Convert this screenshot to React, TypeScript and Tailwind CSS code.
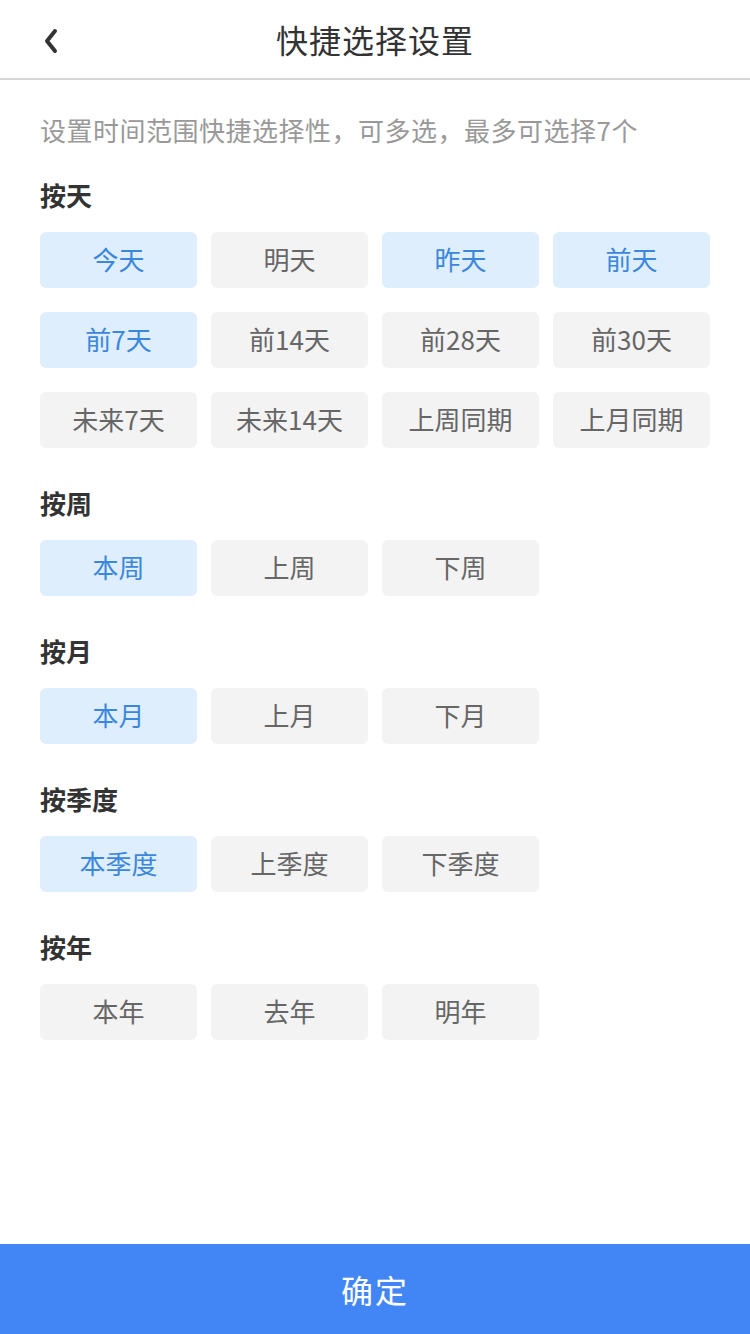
import { useState } from 'react';

type Group = { title: string; items: string[] };

const groups: Group[] = [
  {
    title: '按天',
    items: ['今天', '明天', '昨天', '前天', '前7天', '前14天', '前28天', '前30天', '未来7天', '未来14天', '上周同期', '上月同期'],
  },
  { title: '按周', items: ['本周', '上周', '下周'] },
  { title: '按月', items: ['本月', '上月', '下月'] },
  { title: '按季度', items: ['本季度', '上季度', '下季度'] },
  { title: '按年', items: ['本年', '去年', '明年'] },
];

const initial = ['今天', '昨天', '前天', '前7天', '本周', '本月', '本季度'];

export default function App() {
  const [selected, setSelected] = useState<Set<string>>(new Set(initial));

  const toggle = (name: string) => {
    setSelected(prev => {
      const next = new Set(prev);
      if (next.has(name)) {
        next.delete(name);
      } else if (next.size < 7) {
        next.add(name);
      }
      return next;
    });
  };

  return (
    <div className="min-h-[1334px] w-[750px] bg-white flex flex-col font-['Noto_Sans_CJK_SC','Noto_Sans',sans-serif]">
      <header className="relative h-[80px] flex items-center justify-center border-b-2 border-[#d6d6d6]">
        <button className="absolute left-[36px] top-[26px] w-[30px] h-[30px] flex items-center justify-center">
          <svg width="18" height="28" viewBox="0 0 18 28" fill="none">
            <path d="M13 4 L5 14 L13 24" stroke="#333" strokeWidth="4" strokeLinecap="round" strokeLinejoin="round" />
          </svg>
        </button>
        <h1 className="text-[32px] leading-[40px] text-[#333] tracking-[1px]">快捷选择设置</h1>
      </header>

      <main className="flex-1 px-[40px]">
        <p className="mt-[32px] text-[26px] leading-[36px] tracking-[0.5px] text-[#999]">设置时间范围快捷选择性，可多选，最多可选择7个</p>

        {groups.map((g, i) => (
          <section key={g.title} className={i === 0 ? 'mt-[29px]' : 'mt-[37px]'}>
            <h2 className="text-[26px] leading-[36px] font-bold text-[#333]">{g.title}</h2>
            <div className="mt-[19px] grid grid-cols-4 gap-x-[14px] gap-y-[24px]">
              {g.items.map(item => {
                const on = selected.has(item);
                return (
                  <button
                    key={item}
                    onClick={() => toggle(item)}
                    className={`h-[56px] rounded-[6px] text-[26px] leading-[56px] pb-[2px] flex items-center justify-center ${
                      on ? 'bg-[#deeefc] text-[#3b87dc]' : 'bg-[#f3f3f3] text-[#666]'
                    }`}
                  >
                    {item}
                  </button>
                );
              })}
            </div>
          </section>
        ))}
      </main>

      <button className="h-[90px] w-full bg-[#4285f5] text-white text-[32px] tracking-[2px]">确定</button>
    </div>
  );
}
